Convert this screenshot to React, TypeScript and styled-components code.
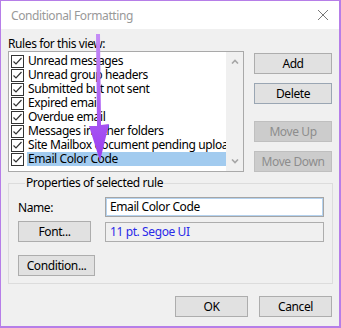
import { createGlobalStyle, styled } from "styled-components";

const GlobalStyle = createGlobalStyle`
  html, body {
    margin: 0;
    padding: 0;
    background: #f0f0f0;
  }
  body {
    font-family: "Noto Sans", "Open Sans", sans-serif;
    font-size: 12px;
    letter-spacing: -0.4px;
    color: #000;
  }
`;

const Window = styled.div`
  position: relative;
  width: 341px;
  height: 328px;
  box-sizing: border-box;
  border: 1px solid #b67ee8;
  border-right-width: 2px;
  border-bottom-width: 2px;
  background: #f0f0f0;
  display: flex;
  flex-direction: column;
  overflow: hidden;
`;

const TitleBar = styled.div`
  height: 28px;
  background: #fff;
  display: flex;
  align-items: center;
  justify-content: space-between;
  padding: 0 8px 0 10px;
  color: #999;
  font-size: 12px;
`;

const CloseIcon = styled.svg`
  width: 12px;
  height: 12px;
  margin-right: 2px;
`;

const Body = styled.div`
  flex: 1;
  display: flex;
  flex-direction: column;
  padding: 7px 7px 0 7px;
`;

const SectionLabel = styled.div`
  height: 15px;
  line-height: 15px;
`;

const TopRow = styled.div`
  display: flex;
  gap: 10px;
`;

const ListBox = styled.div`
  width: 236px;
  height: 121px;
  box-sizing: border-box;
  border: 1px solid #a9a9a9;
  background: #fff;
  display: flex;
`;

const Items = styled.div`
  flex: 1;
  min-width: 0;
  padding: 2px 0 0 2px;
  display: flex;
  flex-direction: column;
`;

const Item = styled.div`
  height: 14px;
  display: flex;
  align-items: center;
  gap: 3px;
`;

const Box = styled.svg`
  width: 13px;
  height: 13px;
  flex: none;
`;

const ItemText = styled.span<{ $selected?: boolean }>`
  flex: 1;
  height: 14px;
  line-height: 14px;
  padding-left: 1px;
  white-space: nowrap;
  overflow-x: clip;
  overflow-y: visible;
  background: ${(p) => (p.$selected ? "#a2cbef" : "transparent")};
`;

const ScrollBar = styled.div`
  width: 17px;
  background: #f0f0f0;
  display: flex;
  flex-direction: column;
  justify-content: space-between;
  align-items: center;
  padding: 7px 0 7px;
`;

const Caret = styled.svg`
  width: 8px;
  height: 5px;
`;

const ButtonColumn = styled.div`
  display: flex;
  flex-direction: column;
  padding-top: 2px;
`;

const Button = styled.button<{ $w: number; $focus?: boolean; $gap?: number }>`
  width: ${(p) => p.$w}px;
  height: 21px;
  margin-top: ${(p) => p.$gap ?? 0}px;
  box-sizing: border-box;
  border: 1px solid ${(p) => (p.$focus ? "#9aa6b3" : "#adadad")};
  background: #e1e1e1;
  font-family: "Noto Sans", "Open Sans", sans-serif;
  font-size: 12px;
  letter-spacing: -0.4px;
  color: #000;
  padding: 0;
  line-height: 18px;

  &:disabled {
    background: #cccccc;
    border-color: #bfbfbf;
    color: #8d8d8d;
  }
`;

const Group = styled.fieldset`
  margin: 4px 0 0 0;
  width: 325px;
  box-sizing: border-box;
  border: 1px solid #dcdcdc;
  padding: 7px 8px 7px 9px;
  display: flex;
  flex-direction: column;
`;

const Legend = styled.legend`
  padding: 0 1px;
  margin-left: 7px;
  height: 14px;
  line-height: 14px;
`;

const FieldRow = styled.div<{ $gap?: number }>`
  display: flex;
  align-items: center;
  justify-content: space-between;
  margin-top: ${(p) => p.$gap ?? 0}px;
`;

const Field = styled.div<{ $active?: boolean }>`
  width: 219px;
  height: 20px;
  box-sizing: border-box;
  border: 1px solid ${(p) => (p.$active ? "#a5a5a5" : "#adadad")};
  box-shadow: ${(p) => (p.$active ? "inset 0 0 0 1px #b4d2ef" : "none")};
  background: ${(p) => (p.$active ? "#fff" : "#f0f0f0")};
  color: ${(p) => (p.$active ? "#000" : "#2a2ae8")};
  padding-left: 4px;
  line-height: 17px;
`;

const Footer = styled.div`
  display: flex;
  justify-content: flex-end;
  gap: 11px;
  padding: 12px 0 0 0;
`;

const Arrow = styled.svg`
  position: absolute;
  left: 80px;
  top: 30px;
  width: 40px;
  height: 135px;
  pointer-events: none;
`;

const rules = [
  "Unread messages",
  "Unread group headers",
  "Submitted but not sent",
  "Expired email",
  "Overdue email",
  "Messages in other folders",
  "Site Mailbox document pending upload",
  "Email Color Code",
];

const CheckBox = () => (
  <Box viewBox="0 0 13 13">
    <rect x="0.5" y="0.5" width="12" height="12" fill="#fff" stroke="#333" />
    <polyline points="2.5,6.5 5,9 10.5,3" fill="none" stroke="#333" strokeWidth="1.2" />
  </Box>
);

export default function App() {
  return (
    <>
      <GlobalStyle />
      <Window>
        <TitleBar>
          <span>Conditional Formatting</span>
          <CloseIcon viewBox="0 0 12 12">
            <path d="M1 1 L11 11 M11 1 L1 11" stroke="#777" strokeWidth="1" />
          </CloseIcon>
        </TitleBar>
        <Body>
          <SectionLabel>Rules for this view:</SectionLabel>
          <TopRow>
            <ListBox>
              <Items>
                {rules.map((r, i) => (
                  <Item key={r}>
                    <CheckBox />
                    <ItemText $selected={i === rules.length - 1}>{r}</ItemText>
                  </Item>
                ))}
              </Items>
              <ScrollBar>
                <Caret viewBox="0 0 8 5">
                  <polyline points="1,4.5 4,1.5 7,4.5" fill="none" stroke="#a6a6a6" strokeWidth="1.6" />
                </Caret>
                <Caret viewBox="0 0 8 5">
                  <polyline points="1,0.5 4,3.5 7,0.5" fill="none" stroke="#a6a6a6" strokeWidth="1.6" />
                </Caret>
              </ScrollBar>
            </ListBox>
            <ButtonColumn>
              <Button $w={78}>Add</Button>
              <Button $w={78} $focus $gap={9}>Delete</Button>
              <Button $w={78} $gap={17} disabled>Move Up</Button>
              <Button $w={78} $gap={9} disabled>Move Down</Button>
            </ButtonColumn>
          </TopRow>
          <Group>
            <Legend>Properties of selected rule</Legend>
            <FieldRow>
              <span>Name:</span>
              <Field $active>Email Color Code</Field>
            </FieldRow>
            <FieldRow $gap={4}>
              <Button $w={73}>Font...</Button>
              <Field>11 pt. Segoe UI</Field>
            </FieldRow>
            <FieldRow $gap={13}>
              <Button $w={77}>Condition...</Button>
            </FieldRow>
          </Group>
          <Footer>
            <Button $w={73}>OK</Button>
            <Button $w={73}>Cancel</Button>
          </Footer>
        </Body>
        <Arrow viewBox="0 0 40 135">
          <defs>
            <linearGradient id="arrowFill" x1="0" y1="0" x2="0" y2="1">
              <stop offset="0" stopColor="#c48cf6" />
              <stop offset="1" stopColor="#9a3cf0" />
            </linearGradient>
          </defs>
          <path
            d="M15 3 L19 3 L20 94 L28 93 L19 130 L8 95 L16 95 Z"
            fill="url(#arrowFill)"
          />
        </Arrow>
      </Window>
    </>
  );
}
